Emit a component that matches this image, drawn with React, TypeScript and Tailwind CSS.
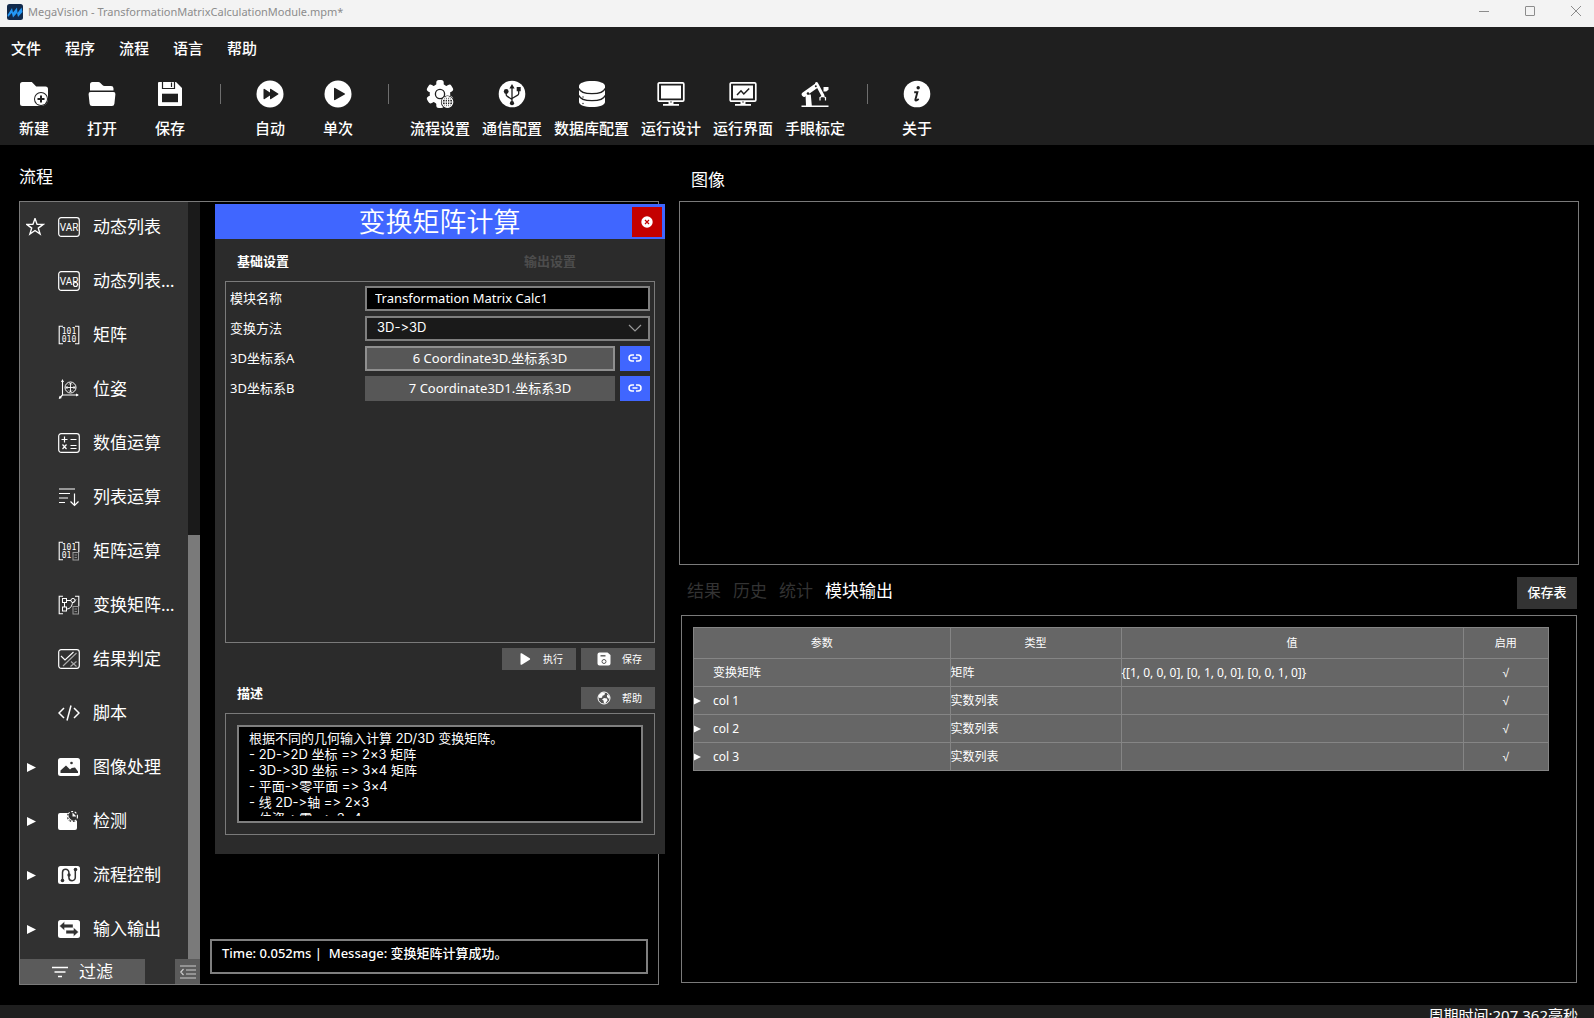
import React, { useState } from 'react';

const DARK = '#1f1f1f';
const TREE = '#313131';

const MENUS = ['文件', '程序', '流程', '语言', '帮助'];

/* ---------- toolbar icons (28 x 28) ---------- */

const Tool: React.FC<{ children: React.ReactNode }> = ({ children }) => (
  <svg viewBox="0 0 28 28" className="h-7 w-7" fill="#fff" aria-hidden="true">{children}</svg>
);

const NewIcon = () => (
  <Tool>
    <path d="M2.5 2h9.3l4.4 4.6h9.3A2.5 2.5 0 0 1 28 9.1V19a7 7 0 0 1-7 7H2.5A2.5 2.5 0 0 1 0 23.500V4.500A2.500 2.500 0 0 1 2.500 2z" />
    <circle cx="21" cy="19" r="7" fill={DARK} />
    <circle cx="21" cy="19" r="6" />
    <path d="M21 15.500v7M17.500 19h7" stroke={DARK} strokeWidth="2" />
  </Tool>
);

const OpenIcon = () => (
  <Tool>
    <path d="M2 10.500V4.500A2.500 2.500 0 0 1 4.500 2h5.800a3 3 0 0 1 2.100.9l2 2.100a3 3 0 0 0 2.100.9h6.500A2.500 2.500 0 0 1 25.500 8.300v2.200z" />
    <path d="M2.600 12h22.800a2 2 0 0 1 2 2.200l-1 9.600a2.500 2.500 0 0 1-2.500 2.200H4.100a2.500 2.500 0 0 1-2.500-2.200l-1-9.600a2 2 0 0 1 2-2.200z" />
  </Tool>
);

const DiskIcon = () => (
  <Tool>
    <path d="M3 2h17l6 6v17a1 1 0 0 1-1 1H3a1 1 0 0 1-1-1V3a1 1 0 0 1 1-1z" />
    <path d="M6.500 2v6.500h12V2" fill="none" stroke={DARK} strokeWidth="1.200" />
    <path d="M15.500 2.500v4.500" stroke={DARK} strokeWidth="1.200" />
    <path d="M6 13.700h16v8.500H6z" fill={DARK} />
  </Tool>
);

const AutoIcon = () => (
  <Tool>
    <circle cx="14" cy="14" r="13.500" />
    <path d="M7.500 9.500a.7.700 0 0 1 1.100-.5l5.400 3.600V9.500a.7.700 0 0 1 1.100-.5l7 4.400a.7.700 0 0 1 0 1.200l-7 4.400a.7.700 0 0 1-1.100-.5v-3.100L8.600 19a.7.700 0 0 1-1.100-.5z" fill={DARK} />
  </Tool>
);

const OnceIcon = () => (
  <Tool>
    <circle cx="14" cy="14" r="13.500" />
    <path d="M10 8.600a.7.700 0 0 1 1.100-.6l9.600 5.400a.7.700 0 0 1 0 1.200L11.100 20a.7.700 0 0 1-1.100-.6z" fill={DARK} />
  </Tool>
);

const GearIcon = () => (
  <Tool>
    <circle cx="14" cy="14" r="10.300" />
    {[0, 60, 120, 180, 240, 300].map(a => (
      <rect key={a} x="10.300" y="0" width="7.400" height="8" rx="2.500" transform={`rotate(${a} 14 14)`} />
    ))}
    <circle cx="14" cy="14" r="4.600" fill="none" stroke={DARK} strokeWidth="1.300" />
    <circle cx="21.500" cy="22" r="6.600" fill={DARK} />
    <g fill="none" stroke="#fff" strokeWidth="1.100">
      <circle cx="21.500" cy="22" r="5.300" />
      <ellipse cx="21.500" cy="22" rx="2.400" ry="5.300" />
      <path d="M16.200 22h10.600M17 19.300h9M17 24.700h9M21.500 16.700v10.600" />
    </g>
  </Tool>
);

const UsbIcon = () => (
  <Tool>
    <circle cx="14" cy="14" r="13.300" />
    <g fill="none" stroke={DARK} strokeWidth="1.300">
      <path d="M14 7v16M14 19.500l-5-3.400a2 2 0 0 1-.8-1.600V12M14 18.500l5.700-3.400a2 2 0 0 0 1-1.600V10" />
    </g>
    <path d="M14 4l2.600 4.500h-5.200zM18.700 7h4v4.300h-4z" fill={DARK} />
    <circle cx="8.200" cy="11.500" r="2.400" fill={DARK} />
    <circle cx="14" cy="23.200" r="2.100" fill={DARK} />
  </Tool>
);

const DatabaseIcon = () => (
  <Tool>
    <path d="M1 6c0-3 5.800-5 13-5s13 2 13 5v16c0 3-5.800 5-13 5S1 25 1 22z" />
    <path d="M1 8.500c1 3.600 6.500 5.200 13 5.200s12-1.600 13-5.200M1 15.500c1 3.600 6.500 5.200 13 5.200s12-1.600 13-5.200" fill="none" stroke={DARK} strokeWidth="1.300" />
    <circle cx="5" cy="17" r=".7" fill={DARK} />
    <circle cx="5" cy="23.500" r=".7" fill={DARK} />
  </Tool>
);

const DesignIcon = () => (
  <Tool>
    <rect x="1.200" y="2.800" width="25.600" height="18.400" rx="1.200" fill="none" stroke="#fff" strokeWidth="1.700" />
    <path d="M4 5.500h20v13H4zM11.500 21h5v3h-5zM6 24h16v1.800H6z" />
    <circle cx="14" cy="22" r=".7" fill={DARK} />
  </Tool>
);

const RunViewIcon = () => (
  <Tool>
    <rect x="1.200" y="2.800" width="25.600" height="18.400" rx="1.200" fill="none" stroke="#fff" strokeWidth="1.700" />
    <path d="M4 5.500h20v13H4zM11.500 21h5v3h-5zM6 24h16v1.800H6z" />
    <path d="M8 15l4-4.200 2.800 3.200 5.400-5.500" fill="none" stroke={DARK} strokeWidth="1.500" />
    <circle cx="14" cy="22" r=".7" fill={DARK} />
  </Tool>
);

const RobotIcon = () => (
  <Tool>
    <path d="M.5 25.600h27V27H.5zM4.500 14.500h5.300l1 11H5z" />
    <path d="M3 14.500L15 6" stroke="#fff" strokeWidth="4.600" strokeLinecap="round" />
    <path d="M15.500 3.500l6.500 12.300" stroke="#fff" strokeWidth="3" strokeLinecap="round" />
    <circle cx="7" cy="13.500" r="1.300" fill={DARK} />
    <circle cx="14.800" cy="6.200" r="1" fill={DARK} />
    <path d="M21.500 16l-2.500 1.600v3M21.500 16l3 1.500v3" fill="none" stroke="#fff" strokeWidth="1.200" />
    <path d="M22.500 7h5v2.800l-2.300 1.800h-2.700z" />
  </Tool>
);

const AboutIcon = () => (
  <Tool>
    <circle cx="14" cy="14" r="13.300" />
    <circle cx="15.200" cy="7.700" r="1.700" fill={DARK} />
    <path d="M11.200 12.300h3.200l-2 7.200c-.3 1.300.8 1.500 3.300-.4" fill="none" stroke={DARK} strokeWidth="1.900" />
  </Tool>
);

type ToolItem = { label: string; icon: React.FC };

const TOOL_GROUPS: ToolItem[][] = [
  [
    { label: '新建', icon: NewIcon },
    { label: '打开', icon: OpenIcon },
    { label: '保存', icon: DiskIcon },
  ],
  [
    { label: '自动', icon: AutoIcon },
    { label: '单次', icon: OnceIcon },
  ],
  [
    { label: '流程设置', icon: GearIcon },
    { label: '通信配置', icon: UsbIcon },
    { label: '数据库配置', icon: DatabaseIcon },
    { label: '运行设计', icon: DesignIcon },
    { label: '运行界面', icon: RunViewIcon },
    { label: '手眼标定', icon: RobotIcon },
  ],
  [{ label: '关于', icon: AboutIcon }],
];

/* ---------- tree icons (22 x 20) ---------- */

const Leaf: React.FC<{ children: React.ReactNode }> = ({ children }) => (
  <svg viewBox="0 0 22 20" className="h-5 w-[22px] shrink-0" fill="none" stroke="#fff" aria-hidden="true">{children}</svg>
);

const Frame = () => <rect x=".7" y=".7" width="20.600" height="18.600" rx="2.500" strokeWidth="1.200" />;
const Brackets = () => <path d="M5 1.200H1.200v17.600H5M17 1.200h3.800v17.600H17" strokeWidth="1.100" />;

const VarIcon = () => (
  <Leaf>
    <Frame />
    <text x="11" y="14" textAnchor="middle" fontSize="10" fontFamily="'Liberation Sans Narrow', Roboto, sans-serif" fill="#fff" stroke="none">VAR</text>
  </Leaf>
);

const VarSetIcon = () => (
  <Leaf>
    <Frame />
    <text x="11" y="14" textAnchor="middle" fontSize="10" fontFamily="'Liberation Sans Narrow', Roboto, sans-serif" fill="#fff" stroke="none">VAR</text>
    <circle cx="17.500" cy="13.500" r="2" fill={TREE} strokeWidth="1.100" />
  </Leaf>
);

const MatrixIcon = () => (
  <Leaf>
    <Brackets />
    <g fill="#fff" stroke="none" fontSize="8" fontFamily="'DejaVu Sans Mono', monospace" textAnchor="middle">
      <text x="11" y="9">101</text>
      <text x="11" y="17">010</text>
    </g>
  </Leaf>
);

const PoseIcon = () => (
  <Leaf>
    <path d="M4.500 2v14H20M4.500 16L1.500 19" strokeWidth="1.100" />
    <path d="M4.500 0l1.500 3H3zM21 16l-3-1.500v3zM.7 20l1-3.200 2.200 2.200z" fill="#fff" stroke="none" />
    <circle cx="12.500" cy="8.500" r="5.500" strokeWidth="1" />
    <path d="M12.500 4v9M8 8.500h9M11 5.500l1.500-1.500L14 5.500M11 11.500l1.500 1.500 1.500-1.500M9.500 7L8 8.500 9.500 10M15.500 7L17 8.500 15.500 10" strokeWidth=".9" />
  </Leaf>
);

const CalcIcon = () => (
  <Leaf>
    <Frame />
    <path d="M3.500 6.500h6M6.500 3.500v6M12.500 6.500h6M12.500 12.500h6M12.500 15.500h6M4.500 11.500l4 4.500M8.500 11.500l-4 4.500" strokeWidth="1.200" />
  </Leaf>
);

const ListCalcIcon = () => (
  <Leaf>
    <path d="M1 2h16M1 6.500h11M1 11h9M1 15.500h6" strokeWidth="1.200" />
    <path d="M16.500 6.500v12M12.500 14.500l4 4 4-4" strokeWidth="1.200" />
  </Leaf>
);

const MatrixCalcIcon = () => (
  <Leaf>
    <path d="M5 1.200H1.200v17.600H5M17 1.200h3.800v10" strokeWidth="1.100" />
    <g fill="#fff" stroke="none" fontSize="8" fontFamily="'DejaVu Sans Mono', monospace" textAnchor="middle">
      <text x="11" y="9">101</text>
      <text x="8.500" y="17">01</text>
    </g>
    <rect x="15" y="11.500" width="5.500" height="7.500" stroke="#999" />
    <path d="M16.500 14h2.500M16.500 16.500h2.500" stroke="#999" strokeWidth=".8" />
  </Leaf>
);

const TransformIcon = () => (
  <Leaf>
    <path d="M5 1.200H1.200v17.600H5M17 1.200h3.800v10" strokeWidth="1.100" />
    <rect x="4.500" y="3.500" width="4" height="4" />
    <rect x="4.500" y="12" width="4" height="4" />
    <circle cx="15" cy="5.500" r="2.100" />
    <path d="M6.500 7.500V12M8.500 5.500H13M8.500 14c4 0 5.500-3 6-6.500M15 7.500l3-3" />
    <rect x="15" y="11.500" width="5.500" height="7.500" stroke="#999" />
    <path d="M16.500 14h2.500M16.500 16.500h2.500" stroke="#999" strokeWidth=".8" />
  </Leaf>
);

const JudgeIcon = () => (
  <Leaf>
    <Frame />
    <path d="M3 7l4 4L15.500 3" strokeWidth="1.100" />
    <path d="M5 17L18.500 4M13 12.500l5.500 5M18.500 12.500l-6 5" stroke="#aaa" strokeWidth="1.100" />
  </Leaf>
);

const ScriptIcon = () => (
  <Leaf>
    <path d="M6 5L1 10l5 5M16 5l5 5-5 5M13 2.500L9 17.500" strokeWidth="1.500" />
  </Leaf>
);

const ImageIcon = () => (
  <Leaf>
    <rect x="0" y="1" width="22" height="18" rx="2.500" fill="#fff" stroke="none" />
    <path d="M2.500 16v-2.500l5.500-5 4 4 1.800-1.500 3.200-.5 3 4V16z" fill={TREE} stroke="none" />
    <circle cx="13.500" cy="6" r="1.300" fill={TREE} stroke="none" />
  </Leaf>
);

const DetectIcon = () => (
  <Leaf>
    <path d="M2 2h9a6 6 0 0 0 8 7.500V17a2 2 0 0 1-2 2H2a2 2 0 0 1-2-2V4a2 2 0 0 1 2-2z" fill="#fff" stroke="none" />
    <circle cx="14.500" cy="5.500" r="5" stroke={TREE} strokeWidth="1.200" />
    <circle cx="14.500" cy="5.500" r="5" strokeWidth="1.100" strokeDasharray="2 1.600" />
    <path d="M13 2.500V7h5" stroke={TREE} strokeWidth="1.500" />
    <path d="M14.500 1.500v4h4z" fill="#fff" stroke="none" />
  </Leaf>
);

const FlowIcon = () => (
  <Leaf>
    <rect x="0" y="1" width="22" height="18" rx="2.500" fill="#fff" stroke="none" />
    <path d="M4.500 15.500V7.500a3.200 3.200 0 0 1 6.400 0v5a3.200 3.200 0 0 0 6.400 0V5" stroke={TREE} strokeWidth="1.500" />
    <circle cx="4.500" cy="15.500" r="1.800" fill={TREE} stroke="none" />
    <circle cx="11" cy="10" r="1.700" fill={TREE} stroke="none" />
    <circle cx="17.500" cy="4.500" r="1.800" fill={TREE} stroke="none" />
  </Leaf>
);

const IoIcon = () => (
  <Leaf>
    <rect x="0" y="1" width="22" height="18" rx="2.500" fill="#fff" stroke="none" />
    <path d="M1.500 7l5-4.500v2.700H15v3.600H6.500v2.700zM20.500 13l-5 4.500v-2.700H8v-3.600h7.500V8.500z" fill={TREE} stroke="#fff" strokeWidth=".4" />
  </Leaf>
);

type TreeItem = { label: string; icon: React.FC; group?: boolean; starred?: boolean };

const TREE_ITEMS: TreeItem[] = [
  { label: '动态列表', icon: VarIcon, starred: true },
  { label: '动态列表…', icon: VarSetIcon },
  { label: '矩阵', icon: MatrixIcon },
  { label: '位姿', icon: PoseIcon },
  { label: '数值运算', icon: CalcIcon },
  { label: '列表运算', icon: ListCalcIcon },
  { label: '矩阵运算', icon: MatrixCalcIcon },
  { label: '变换矩阵…', icon: TransformIcon },
  { label: '结果判定', icon: JudgeIcon },
  { label: '脚本', icon: ScriptIcon },
  { label: '图像处理', icon: ImageIcon, group: true },
  { label: '检测', icon: DetectIcon, group: true },
  { label: '流程控制', icon: FlowIcon, group: true },
  { label: '输入输出', icon: IoIcon, group: true },
];

const OUTPUT_ROWS = [
  { name: '变换矩阵', type: '矩阵', value: '{[1, 0, 0, 0], [0, 1, 0, 0], [0, 0, 1, 0]}', child: false },
  { name: 'col 1', type: '实数列表', value: '', child: true },
  { name: 'col 2', type: '实数列表', value: '', child: true },
  { name: 'col 3', type: '实数列表', value: '', child: true },
];

const DESCRIPTION = `根据不同的几何输入计算 2D/3D 变换矩阵。
- 2D->2D 坐标 => 2×3 矩阵
- 3D->3D 坐标 => 3×4 矩阵
- 平面->零平面 => 3×4
- 线 2D->轴 => 2×3
- 位姿->零 => 3×4`;

const LinkIcon = () => (
  <svg viewBox="0 0 14 14" className="h-3.5 w-3.5" fill="none" stroke="#fff" strokeWidth="1.500" aria-hidden="true">
    <path d="M6 4H4a3 3 0 0 0 0 6h2M8 4h2a3 3 0 0 1 0 6H8M4.500 7h5" />
  </svg>
);

const TitleBar = () => (
  <header className="flex h-[27px] shrink-0 items-center justify-between bg-[#f3f3f3] pl-[7px] text-[11px] text-[#8c8c8c]">
    <div className="flex items-center gap-[5px] pb-[3px]">
      <svg viewBox="0 0 16 16" className="h-4 w-4" aria-hidden="true">
        <rect width="16" height="16" rx="2.500" fill="#122a4c" />
        <path d="M.5 11L5 4l1 4.500L10 3.500l.5 5.500 4-5.500 1 4.500-4.500 5-1-4-4 4.500-1.200-4.500L1 13z" fill="#2497f5" />
      </svg>
      <span>MegaVision - TransformationMatrixCalculationModule.mpm*</span>
    </div>
    <div className="flex items-center gap-9 pr-[13px] pb-1.5">
      <button aria-label="最小化" className="flex">
        <svg viewBox="0 0 10 10" className="h-2.5 w-2.5" stroke="#8c8c8c"><path d="M0 5.500h10" /></svg>
      </button>
      <button aria-label="最大化" className="flex">
        <svg viewBox="0 0 10 10" className="h-2.5 w-2.5" stroke="#8c8c8c" fill="none"><rect x=".5" y=".5" width="9" height="9" rx=".5" /></svg>
      </button>
      <button aria-label="关闭" className="flex">
        <svg viewBox="0 0 10 10" className="h-2.5 w-2.5" stroke="#8c8c8c"><path d="M0 0l10 10M10 0L0 10" /></svg>
      </button>
    </div>
  </header>
);

const Toolbar = () => (
  <div className="h-[118px] shrink-0 bg-[#1f1f1f] text-[15px] leading-5 font-medium">
    <nav className="flex gap-6 px-[11px] pt-[11px]">
      {MENUS.map(m => <button key={m}>{m}</button>)}
    </nav>
    <div className="flex pt-[22px]">
      {TOOL_GROUPS.map((group, i) => (
        <React.Fragment key={i}>
          {i > 0 && (
            <div className="flex w-8 justify-center pt-1">
              <span className="h-5 w-px bg-[#6e6e6e]" />
            </div>
          )}
          {group.map(({ label, icon: Icon }) => (
            <button key={label} className="flex min-w-[68px] flex-col items-center gap-2.5 px-1.5 whitespace-nowrap">
              <Icon />
              {label}
            </button>
          ))}
        </React.Fragment>
      ))}
    </div>
  </div>
);

const ModuleTree = () => (
  <aside className="flex w-[180px] shrink-0 flex-col bg-[#313131]">
    <div className="flex min-h-0 flex-1">
      <ul className="flex flex-1 flex-col gap-1 overflow-hidden text-[17px]">
        {TREE_ITEMS.map(({ label, icon: Icon, group, starred }, i) => (
          <li key={i} className="flex h-[50px] shrink-0 items-center whitespace-nowrap">
            <span className="w-[38px] shrink-0 pl-1.5">
              {starred && (
                <svg viewBox="0 0 19 19" className="h-[19px] w-[19px]" fill="none" stroke="#fff" strokeWidth="1.400" aria-hidden="true">
                  <path d="M9 .5l2.100 5.900h6.100l-4.900 3.700 1.800 6L9 12.500l-5.100 3.600 1.800-6L.8 6.400h6.100z" />
                </svg>
              )}
              {group && (
                <svg viewBox="0 0 12 12" className="h-3 w-3" fill="#fff" aria-hidden="true"><path d="M1 2l9 4.500L1 11z" /></svg>
              )}
            </span>
            <Icon />
            <span className="pl-[13px]">{label}</span>
          </li>
        ))}
      </ul>
      <div className="flex w-3 flex-col justify-end bg-[#1a1a1a]">
        <div className="h-[56%] bg-[#7a7a7a]" />
      </div>
    </div>
    <div className="flex h-[25px] shrink-0 justify-between">
      <button className="flex w-[125px] items-center justify-center gap-[11px] bg-[#5b5b5b] text-[17px] leading-6">
        <svg viewBox="0 0 16 12" className="h-3 w-4" stroke="#fff" strokeWidth="1.500" aria-hidden="true"><path d="M0 1.500h16M2.500 6h11M6 10.500h4" /></svg>
        过滤
      </button>
      <button aria-label="收起" className="flex w-[25px] items-center justify-center bg-[#5b5b5b]">
        <svg viewBox="0 0 16 14" className="h-3.5 w-4" stroke="#ccc" strokeWidth="1.200" fill="none" aria-hidden="true"><path d="M0 1h16M6 5h10M6 9h10M0 13h16M3.500 4L.8 7l2.700 3" /></svg>
      </button>
    </div>
  </aside>
);

const FORM_LABEL = 'w-[135px] shrink-0';
const SMALL_BUTTON = 'flex h-[22px] w-[74px] items-center justify-between bg-[#575757] pl-4 pr-[13px] text-[10px]';

const CoordinateRow: React.FC<{ label: string; value: string; focused?: boolean }> = ({ label, value, focused }) => (
  <div className="flex h-[25px] items-center">
    <span className={FORM_LABEL}>{label}</span>
    <button aria-label={label} className={`h-full flex-1 border-2 bg-[#575757] pb-0.5 leading-5 ${focused ? 'border-[#8f8f8f]' : 'border-[#575757]'}`}>{value}</button>
    <button aria-label="链接" className="ml-[5px] flex h-full w-[30px] items-center justify-center bg-[#4066ff] pb-px"><LinkIcon /></button>
  </div>
);

const ModuleDialog = () => {
  const [name, setName] = useState('Transformation Matrix Calc1');
  const [method, setMethod] = useState('3D->3D');

  return (
    <div role="dialog" aria-label="变换矩阵计算" className="absolute top-0.5 left-[195px] z-10 w-[450px] bg-[#2b2b2b] pb-[19px] text-[13px]">
      <div className="flex h-[35px] items-center bg-[#4066ff] pr-[3px]">
        <h2 className="flex-1 pl-8 text-center text-[27px] leading-[35px] font-[350]">变换矩阵计算</h2>
        <button aria-label="关闭" className="flex h-[30px] w-[30px] items-center justify-center bg-[#c40000]">
          <svg viewBox="0 0 12 12" className="h-3 w-3" aria-hidden="true">
            <circle cx="6" cy="6" r="5.700" fill="#fff" />
            <path d="M4 4l4 4M8 4L4 8" stroke="#c40000" strokeWidth="1.200" />
          </svg>
        </button>
      </div>
      <div className="flex h-[42px] items-center pt-1 pl-[22px] font-bold">
        <button className="w-[287px] text-left">基础设置</button>
        <button className="text-[#4d4d4d]">输出设置</button>
      </div>

      <div className="mx-2.5 flex h-[362px] flex-col gap-[5px] border border-[#7a7a7a] p-1">
        <div className="flex h-[25px] items-center">
          <label htmlFor="module-name" className={FORM_LABEL}>模块名称</label>
          <input
            id="module-name"
            value={name}
            onChange={e => setName(e.target.value)}
            className="h-full min-w-0 flex-1 border-2 border-[#7f7f7f] bg-black px-2 pb-0.5 outline-none"
          />
        </div>
        <div className="flex h-[25px] items-center">
          <label htmlFor="method" className={FORM_LABEL}>变换方法</label>
          <div className="relative h-full flex-1">
            <select
              id="method"
              value={method}
              onChange={e => setMethod(e.target.value)}
              className="block h-full w-full appearance-none border-2 border-[#7f7f7f] bg-[#1a1a1a] px-2.5 pb-0.5 font-['Inter',sans-serif] outline-none [font-variant-ligatures:none]"
            >
              <option>3D-&gt;3D</option>
              <option>2D-&gt;2D</option>
            </select>
            <svg viewBox="0 0 14 8" className="pointer-events-none absolute top-2 right-2 h-2 w-3.5" fill="none" stroke="#999" strokeWidth="1.200" aria-hidden="true"><path d="M1 1l6 6 6-6" /></svg>
          </div>
        </div>
        <CoordinateRow label="3D坐标系A" value="6 Coordinate3D.坐标系3D" focused />
        <CoordinateRow label="3D坐标系B" value="7 Coordinate3D1.坐标系3D" />
      </div>

      <div className="flex justify-end gap-[5px] px-2.5 pt-[5px]">
        <button className={SMALL_BUTTON}>
          <svg viewBox="0 0 14 14" className="h-3.5 w-3.5" fill="#fff" aria-hidden="true"><path d="M2.500 2a.8.800 0 0 1 1.200-.7l8 5a.8.800 0 0 1 0 1.400l-8 5a.8.800 0 0 1-1.200-.7z" /></svg>
          执行
        </button>
        <button className={SMALL_BUTTON}>
          <svg viewBox="0 0 14 14" className="h-3.5 w-3.5" aria-hidden="true">
            <path d="M2.500.5h8l3 2.500v8.500a2 2 0 0 1-2 2h-9a2 2 0 0 1-2-2v-9a2 2 0 0 1 2-2z" fill="#fff" />
            <path d="M3.500 3.800h5" stroke="#575757" strokeWidth="1.400" />
            <circle cx="7" cy="9.500" r="2" fill="none" stroke="#575757" />
          </svg>
          保存
        </button>
      </div>

      <div className="flex justify-between pt-[17px] pr-2.5 pb-1 pl-[22px]">
        <label htmlFor="description" className="leading-3 font-bold">描述</label>
        <button className={SMALL_BUTTON}>
          <svg viewBox="0 0 14 14" className="h-3.5 w-3.5" aria-hidden="true">
            <circle cx="7" cy="7" r="6" fill="none" stroke="#fff" />
            <path d="M2 4l3-2.500 3 .3-.5 2.200-2 .8-.5 2L2.500 7 1.500 6zM7 7l3 .5.500 2L8.500 12l-1.500.5-.5-3L5 8.500zM10 3.500l2 1 .8 2-.8 1.500-2-2z" fill="#fff" />
          </svg>
          帮助
        </button>
      </div>

      <div className="mx-2.5 border border-[#7a7a7a] p-[11px]">
        <div className="border-2 border-[#7f7f7f] bg-black px-2.5 pt-[3px] pb-[5px]">
          <textarea
            id="description"
            readOnly
            value={DESCRIPTION}
            className="block h-[86px] w-full resize-none overflow-hidden font-['Inter','Noto_Sans_CJK_SC',sans-serif] leading-4 outline-none [font-variant-ligatures:none]"
          />
        </div>
      </div>
    </div>
  );
};

const FlowPanel = () => (
  <section className="flex w-[640px] shrink-0 flex-col">
    <h2 className="h-14 pt-5 text-[17px] leading-6">流程</h2>
    <div className="relative flex min-h-0 flex-1 border border-[#7a7a7a]">
      <ModuleTree />
      <div className="flex flex-1 flex-col justify-end p-2.5">
        <div className="h-[35px] border-2 border-[#7f7f7f] px-2.5 pt-0.5 text-[13px] leading-5 font-medium whitespace-pre">
          {'Time: 0.052ms |  Message: 变换矩阵计算成功。'}
        </div>
      </div>
      <ModuleDialog />
    </div>
  </section>
);

const TABS = ['结果', '历史', '统计', '模块输出'];

const OutputTable = () => (
  <table className="w-full table-fixed border-collapse bg-[#666] text-xs">
    <thead>
      <tr className="h-[31px] text-[11px]">
        <th className="w-[30%] border border-[#858585] font-normal">参数</th>
        <th className="w-[20%] border border-[#858585] font-normal">类型</th>
        <th className="w-[40%] border border-[#858585] font-normal">值</th>
        <th className="w-[10%] border border-[#858585] font-normal">启用</th>
      </tr>
    </thead>
    <tbody>
      {OUTPUT_ROWS.map(row => (
        <tr key={row.name} className="h-7">
          <td className="border border-[#858585] p-0">
            <div className="flex items-center">
              <span className="w-[19px]">
                {row.child && <svg viewBox="0 0 7 8" className="h-2 w-[7px]" fill="#fff" aria-hidden="true"><path d="M0 .5L7 4 0 7.500z" /></svg>}
              </span>
              {row.name}
            </div>
          </td>
          <td className="border border-[#858585] p-0">{row.type}</td>
          <td className="border border-[#858585] p-0">{row.value}</td>
          <td className="border border-[#858585] p-0 text-center font-['Liberation_Sans',sans-serif]">√</td>
        </tr>
      ))}
    </tbody>
  </table>
);

const ResultPanel = () => {
  const [tab, setTab] = useState('模块输出');

  return (
    <section className="flex min-w-0 flex-1 flex-col">
      <h2 className="h-14 pt-[23px] pl-3 text-[17px] leading-6">图像</h2>
      <div className="h-[364px] border border-[#7a7a7a]" />
      <div className="flex h-[50px] shrink-0 items-center justify-between pt-1.5 pr-0.5 pl-2">
        <div className="flex gap-3 pb-1 text-[17px]">
          {TABS.map(t => (
            <button key={t} onClick={() => setTab(t)} className={t === tab ? 'text-white' : 'text-[#333]'}>{t}</button>
          ))}
        </div>
        <button className="h-8 w-[60px] bg-[#333] text-[13px] font-medium">保存表</button>
      </div>
      <div className="mx-0.5 mb-0.5 min-h-0 flex-1 border border-[#7a7a7a] pt-[11px] pr-[27px] pl-[11px]">
        <OutputTable />
      </div>
    </section>
  );
};

export default function App() {
  return (
    <div className="flex h-screen flex-col overflow-hidden bg-black font-['Noto_Sans','Noto_Sans_CJK_SC',sans-serif] text-white">
      <TitleBar />
      <Toolbar />
      <main className="flex min-h-0 flex-1 gap-5 pr-[15px] pb-5 pl-[19px]">
        <FlowPanel />
        <ResultPanel />
      </main>
      <footer className="flex h-[13px] shrink-0 justify-end overflow-hidden bg-[#1f1f1f] pr-4 text-[15px] leading-5">
        <span>周期时间:207.362毫秒</span>
      </footer>
    </div>
  );
}
